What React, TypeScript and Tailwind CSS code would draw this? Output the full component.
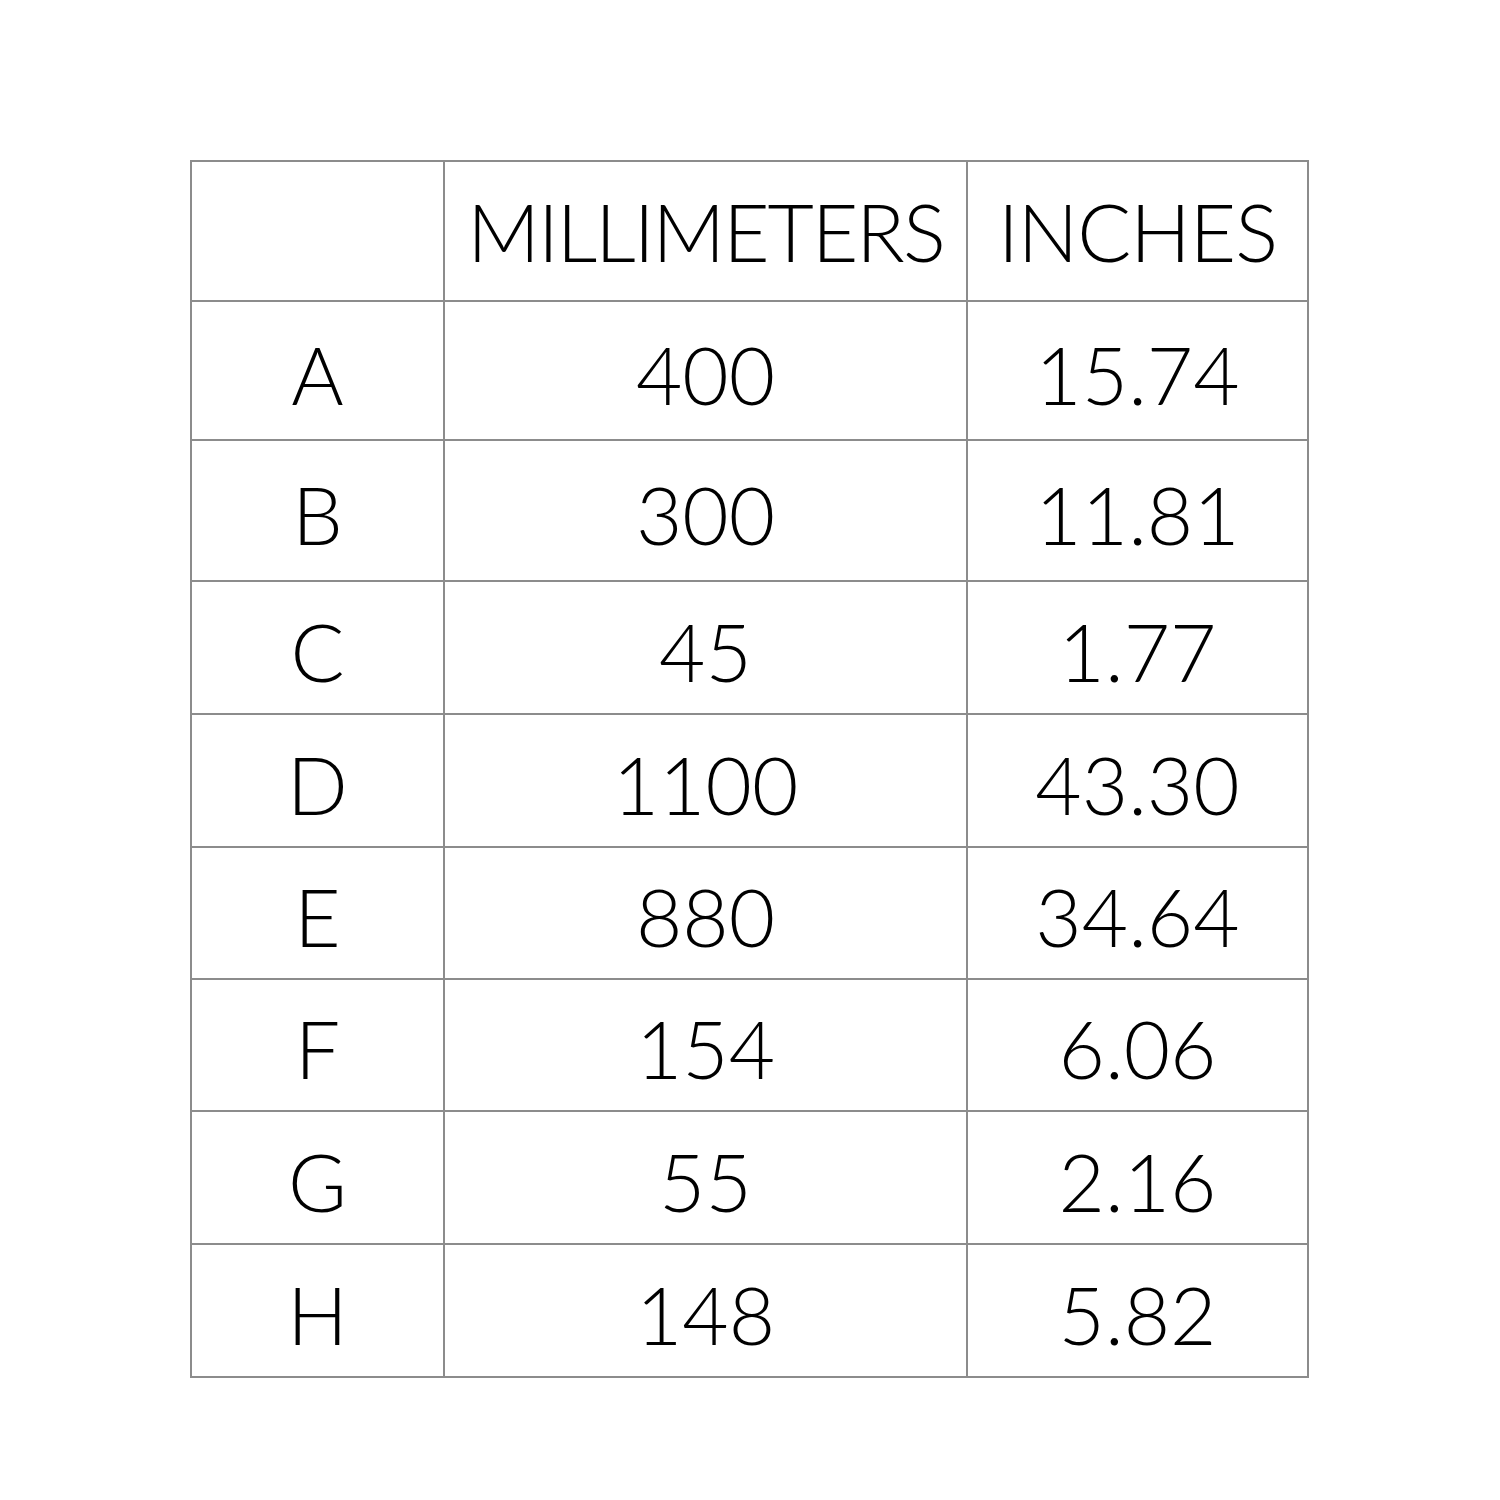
const rows: [string, string, string, string][] = [
  ['A', '400', '15.74', 'h-[139px]'],
  ['B', '300', '11.81', 'h-[141px]'],
  ['C', '45', '1.77', 'h-[133px]'],
  ['D', '1100', '43.30', 'h-[133px]'],
  ['E', '880', '34.64', 'h-[132px]'],
  ['F', '154', '6.06', 'h-[132px]'],
  ['G', '55', '2.16', 'h-[133px]'],
  ['H', '148', '5.82', 'h-[133px]'],
];

const cell = 'border-2 border-[#8c8c8c] p-0 text-center align-middle';

export default function App() {
  return (
    <div className="w-[1500px] h-[1500px] bg-white pt-[160px] pl-[190px] font-['Lato','Liberation_Sans',sans-serif] text-black">
      <table className="border-collapse table-fixed w-[1117px] text-[80px] leading-none font-light">
        <colgroup>
          <col className="w-[253px]" />
          <col className="w-[523px]" />
          <col className="w-[341px]" />
        </colgroup>
        <thead>
          <tr className="h-[140px]">
            <th className={cell}></th>
            <th className={`${cell} font-light tracking-[-2px]`}>MILLIMETERS</th>
            <th className={`${cell} font-light tracking-[-1px]`}>INCHES</th>
          </tr>
        </thead>
        <tbody>
          {rows.map(([label, mm, inch, h]) => (
            <tr key={label} className={h}>
              <td className={cell}>
                <span className="relative top-[3px]">{label}</span>
              </td>
              <td className={cell}>
                <span className="relative top-[3px]">{mm}</span>
              </td>
              <td className={cell}>
                <span className="relative top-[3px]">{inch}</span>
              </td>
            </tr>
          ))}
        </tbody>
      </table>
    </div>
  );
}
